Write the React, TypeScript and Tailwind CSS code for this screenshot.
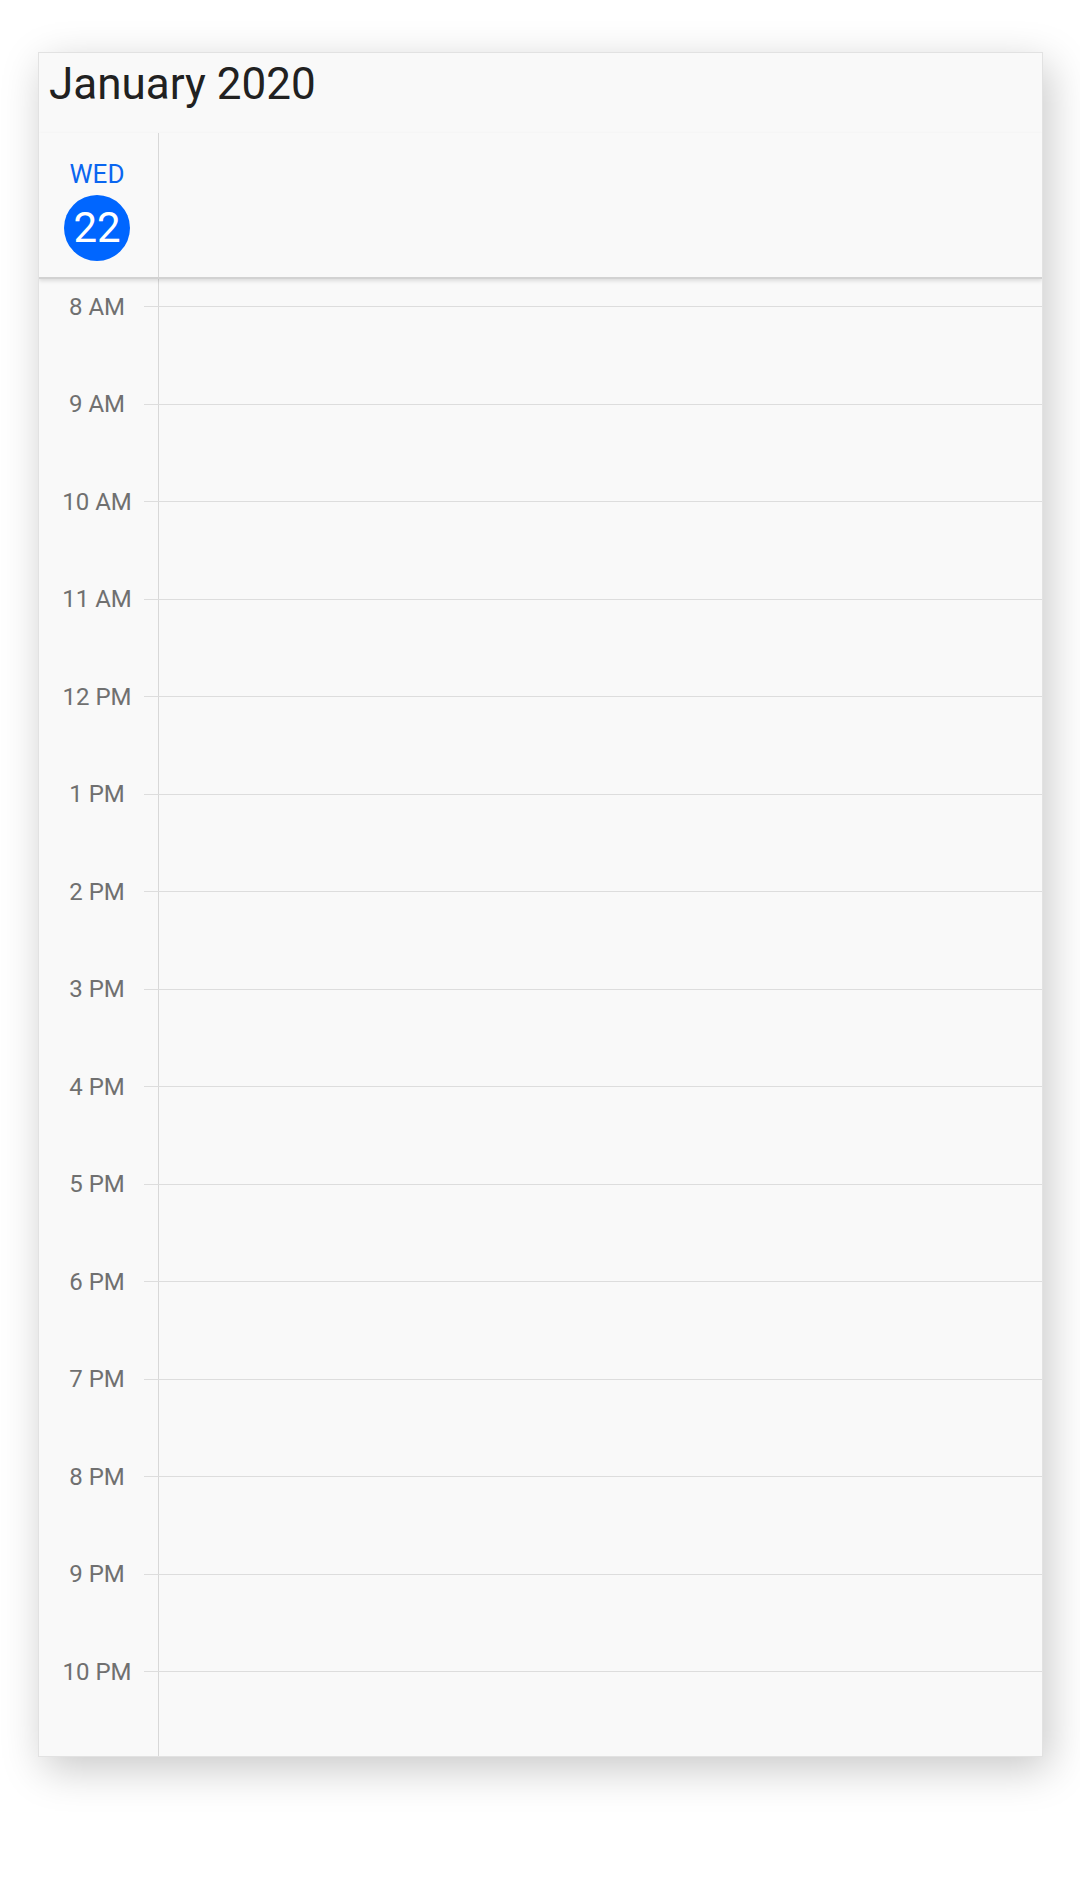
const hours = [
  "8 AM", "9 AM", "10 AM", "11 AM", "12 PM", "1 PM", "2 PM", "3 PM",
  "4 PM", "5 PM", "6 PM", "7 PM", "8 PM", "9 PM", "10 PM", "",
];

export default function App() {
  return (
    <div className="min-h-[1880px] w-[1080px] bg-white pt-[52px] pl-[38px] font-['Roboto',sans-serif]">
      <div className="flex h-[1705px] w-[1005px] flex-col overflow-hidden border border-[#e2e2e2] bg-[#f9f9f9] shadow-[6px_12px_40px_rgba(0,0,0,0.22)]">
        {/* title */}
        <div className="pl-[10px] pt-[6px] text-[44px] leading-[1.172] text-[#212121]">January 2020</div>

        {/* day header */}
        <div className="relative z-10 mt-[22px] flex border-b-2 border-[#d2d2d2] shadow-[0_2px_4px_rgba(0,0,0,0.12)]">
          <div className="flex w-[120px] shrink-0 flex-col items-center border-r border-[#d8d8d8] pt-[26px] pr-[3px] pb-[16px]">
            <span className="text-[26px] leading-[1.172] text-[#0a66f0]">WED</span>
            <div className="mt-[6px] flex h-[66px] w-[66px] items-center justify-center rounded-full bg-[#0066ff] text-[42px] leading-none text-white">
              22
            </div>
          </div>
          <div className="flex-1" />
        </div>

        {/* hours grid */}
        <div className="flex-1 overflow-hidden">
          <div className="-mt-[21px] flex flex-col">
            {hours.map((h, i) => (
              <div key={i} className="flex h-[97.5px] items-center">
                <div className="flex h-full w-[120px] shrink-0 items-center justify-center border-r border-[#d8d8d8] pr-[3px] text-[24px] text-[#707070]">
                  {h}
                </div>
                {h && <div className="-ml-[15px] h-px flex-1 bg-[#dddddd]" />}
              </div>
            ))}
          </div>
        </div>
      </div>
    </div>
  );
}
